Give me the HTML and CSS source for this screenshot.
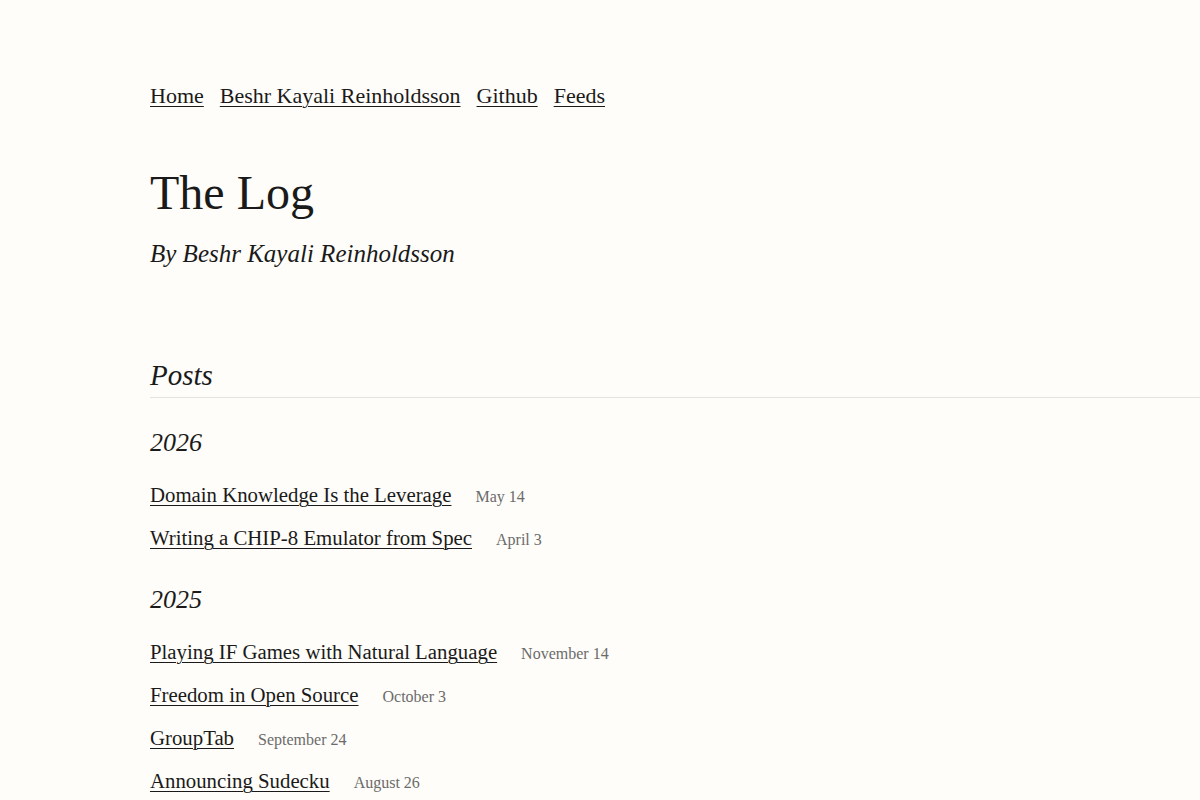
FILE: index.html
```html
<!DOCTYPE html>
<html lang="en">
<head>
<meta charset="utf-8">
<title>The Log</title>
<link rel="stylesheet" href="styles.css">
</head>
<body>
<div class="page">
  <nav class="nav">
    <a href="#">Home</a>
    <a href="#">Beshr Kayali Reinholdsson</a>
    <a href="#">Github</a>
    <a href="#">Feeds</a>
  </nav>
  <header class="header">
    <h1 class="title">The Log</h1>
    <p class="subtitle">By Beshr Kayali Reinholdsson</p>
  </header>
  <section class="posts">
    <h2 class="posts-heading">Posts</h2>
    <div class="year-group">
      <h3 class="year">2026</h3>
      <ul class="post-list">
        <li class="post"><a href="#">Domain Knowledge Is the Leverage</a><span class="date">May 14</span></li>
        <li class="post"><a href="#">Writing a CHIP-8 Emulator from Spec</a><span class="date">April 3</span></li>
      </ul>
    </div>
    <div class="year-group">
      <h3 class="year">2025</h3>
      <ul class="post-list">
        <li class="post"><a href="#">Playing IF Games with Natural Language</a><span class="date">November 14</span></li>
        <li class="post"><a href="#">Freedom in Open Source</a><span class="date">October 3</span></li>
        <li class="post"><a href="#">GroupTab</a><span class="date">September 24</span></li>
        <li class="post"><a href="#">Announcing Sudecku</a><span class="date">August 26</span></li>
      </ul>
    </div>
  </section>
</div>
</body>
</html>
```

FILE: styles.css
```css
html, body {
  margin: 0;
  padding: 0;
  background: #fefdf9;
}
body {
  font-family: "Liberation Serif", "DejaVu Serif", serif;
  color: #1a1a1a;
}
.page {
  padding: 81px 0 40px 150px;
}
a {
  color: #1a1a1a;
  text-decoration: underline;
  text-decoration-thickness: 1px;
  text-underline-offset: 3px;
}
.nav {
  display: flex;
  gap: 16px;
  font-size: 22px;
  line-height: 30px;
}
.header {
  margin-top: 54px;
}
.title {
  margin: 0;
  font-size: 48px;
  line-height: 56px;
  font-weight: 400;
}
.subtitle {
  margin: 16px 0 0;
  font-size: 25px;
  line-height: 34px;
  font-style: italic;
}
.posts {
  margin-top: 86px;
}
.posts-heading {
  margin: 0;
  font-size: 29px;
  line-height: 36px;
  font-weight: 400;
  font-style: italic;
  padding-bottom: 4px;
  border-bottom: 1px solid #e6e4de;
}
.year-group {
  margin-top: 29px;
}
.year-group + .year-group {
  margin-top: 25px;
}
.year {
  margin: 0;
  font-size: 26px;
  line-height: 32px;
  font-weight: 400;
  font-style: italic;
}
.post-list {
  list-style: none;
  margin: 14px 0 0;
  padding: 0;
}
.post {
  display: flex;
  align-items: baseline;
  gap: 24px;
  font-size: 20.8px;
  line-height: 43px;
}
.date {
  font-size: 16px;
  line-height: 16px;
  color: #6b6b6b;
}
```
